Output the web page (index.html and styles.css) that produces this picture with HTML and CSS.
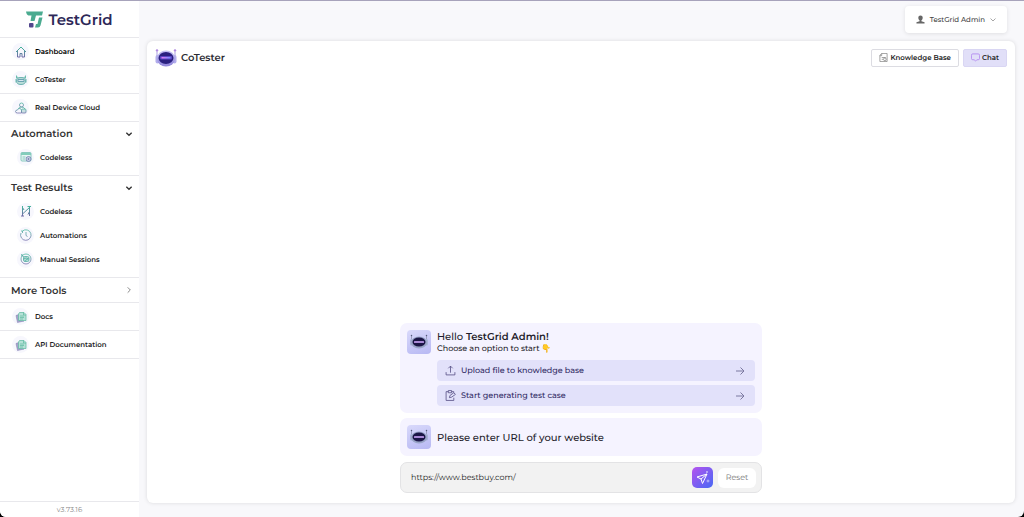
FILE: index.html
```
<!DOCTYPE html>
<html lang="en">
	<head>
		<meta charset="utf-8">
		<title>TestGrid</title>
		<link rel="stylesheet" href="styles.css">
	</head>
	<body>
		<svg class="sprite" aria-hidden="true">
			<defs>
				<linearGradient id="duo" x1="0" y1="0" x2="0" y2="1">
					<stop offset="0" stop-color="#45b79b"/>
					<stop offset="1" stop-color="#6f69a6"/>
				</linearGradient>
				<linearGradient id="shell" x1="0" y1="0" x2="0" y2="1">
					<stop offset="0" stop-color="#c6c3f4"/>
					<stop offset="1" stop-color="#8f84da"/>
				</linearGradient>
				<linearGradient id="visor" x1="0" y1="0" x2="1" y2="0">
					<stop offset="0" stop-color="#e77bf0"/>
					<stop offset="1" stop-color="#6f8bff"/>
				</linearGradient>
			</defs>
			<symbol id="bot" viewBox="0 0 44 38">
				<path d="M4 8v9M40 8v9" stroke="#a99fe0" stroke-width="2"/>
				<circle cx="4" cy="5" r="2.5" fill="#b08be0"/>
				<circle cx="40" cy="5" r="2.5" fill="#b08be0"/>
				<rect x="1" y="14" width="8" height="17" rx="4" fill="#b3aeec"/>
				<rect x="35" y="14" width="8" height="17" rx="4" fill="#b3aeec"/>
				<ellipse cx="22" cy="21" rx="18" ry="16" fill="url(#shell)"/>
				<ellipse cx="22" cy="20" rx="15" ry="12" fill="#2a2080"/>
				<rect x="10" y="16" width="24" height="7" rx="2" fill="#5c46c4"/>
				<rect x="13" y="18" width="18" height="3" fill="url(#visor)"/>
			</symbol>
			<symbol id="bot-small" viewBox="0 0 48 48">
				<path d="M9 12v6M39 12v6" stroke="#8e92b0" stroke-width="1.500"/>
				<circle cx="9" cy="11" r="1.500" fill="#555a7c"/>
				<circle cx="39" cy="11" r="1.500" fill="#555a7c"/>
				<rect x="6" y="18" width="6" height="13" rx="3" fill="#a8b2d7"/>
				<rect x="36" y="18" width="6" height="13" rx="3" fill="#a8b2d7"/>
				<ellipse cx="24" cy="25" rx="16" ry="12" fill="#98a4c6"/>
				<ellipse cx="24" cy="24" rx="13" ry="9" fill="#1b1546"/>
				<rect x="14" y="22" width="20" height="4" rx="1" fill="#a98ad6"/>
			</symbol>
			<symbol id="docs" viewBox="0 0 24 24">
				<path d="M2 9l5-2 2 12 9 1-13 3z" fill="#a5a4cb" stroke="#7e7ab0"/>
				<path d="M9 3h9l4 4v12H7V6z" fill="#b5e1d7" stroke="#64bba4" stroke-width="1.500"/>
				<path d="M17 3v5h5M10 10h8M10 13h8M10 16h6" fill="none" stroke="#64bba4" stroke-width="1.500"/>
			</symbol>
			<symbol id="down" viewBox="0 0 12 12">
				<path d="M2 4l4 4 4-4" fill="none" stroke="currentColor" stroke-width="2"/>
			</symbol>
			<symbol id="arrow" viewBox="0 0 20 20">
				<path d="M2 10h16M11 3l7 7-7 7" fill="none" stroke="currentColor" stroke-width="2"/>
			</symbol>
		</svg>

		<div class="app">
			<aside class="sidebar">
				<a class="logo" href="#">
					<svg viewBox="0 0 34 34" width="17" height="17" aria-hidden="true">
						<path d="M0 1h34l-2 8H20l-3 11H9l2-11H5Q1 8 0 1z" fill="#4bab90"/>
						<path d="M26 13h7l-4 16q-1 4-5 4h-6l2-7h3z" fill="#4bab90"/>
						<rect x="6" y="24" width="9" height="9" rx="2" fill="#51468d"/>
					</svg>
					<span>TestGrid</span>
				</a>
				<nav class="menu">
					<a class="item active" href="#">
						<span class="bubble">
							<svg viewBox="0 0 24 24" aria-hidden="true"><path d="M2 12L12 2l10 10M5 10v12h5v-7h4v7h5V10" fill="none" stroke="url(#duo)" stroke-width="2" stroke-linejoin="round"/></svg>
						</span>
						Dashboard
					</a>
					<a class="item" href="#">
						<span class="bubble">
							<svg viewBox="0 0 24 24" aria-hidden="true">
								<path d="M3 3v6M21 3v6M3 5l4 3q5-2 10 0l4-3M2 10v7M22 10v7" fill="none" stroke="#6abcae" stroke-width="2"/>
								<ellipse cx="12" cy="14" rx="9" ry="7" fill="#b9ded9" stroke="#6fb3b2" stroke-width="2"/>
								<path d="M6 11h12v4H6z" fill="#d9e7f0" stroke="#6ba3b2" stroke-width="2"/>
							</svg>
						</span>
						CoTester
					</a>
					<a class="item" href="#">
						<span class="bubble">
							<svg viewBox="0 0 24 24" fill="none" stroke="url(#duo)" stroke-width="1.500" aria-hidden="true">
								<circle cx="13" cy="6" r="4"/>
								<path d="M7 13q1-3 6-3t7 4M5 22q-4 0-4-3t4-3q1-4 5-3 3 1 3 4v5z"/>
								<rect x="13" y="14" width="9" height="8" rx="2" fill="#c9dfe2"/>
							</svg>
						</span>
						Real Device Cloud
					</a>
					<section class="group">
						<h2><button type="button">Automation <svg class="caret" aria-hidden="true"><use href="#down"/></svg></button></h2>
						<a class="subitem" href="#">
							<span class="bubble">
								<svg viewBox="0 0 24 24" aria-hidden="true">
									<rect x="2" y="3" width="20" height="17" rx="2" fill="#e8f6f4" stroke="#67b9ab" stroke-width="1.500"/>
									<path d="M2 4h20v4H2z" fill="#83cdbb"/>
									<path d="M5 12h6M5 16h5" stroke="#67b9ab" stroke-width="1.500"/>
									<circle cx="17" cy="16" r="5" fill="#c6cde3" stroke="#6c7caf" stroke-width="1.500"/>
									<circle cx="17" cy="16" r="1.500" fill="#5c659e"/>
								</svg>
							</span>
							Codeless
						</a>
					</section>
					<section class="group">
						<h2><button type="button">Test Results <svg class="caret" aria-hidden="true"><use href="#down"/></svg></button></h2>
						<a class="subitem" href="#">
							<span class="bubble">
								<svg viewBox="0 0 24 24" aria-hidden="true"><path d="M5 2v20M2 22h6M4 19L20 4M19 2v20M15 3h7M5 5l3 5M16 19l3-6" fill="none" stroke="url(#duo)" stroke-width="2"/></svg>
							</span>
							Codeless
						</a>
						<a class="subitem" href="#">
							<span class="bubble">
								<svg viewBox="0 0 24 24" aria-hidden="true"><path d="M5 4a10.500 10.500 0 1 1-3 4M5 4H2m3 0v4M12 6v7l3 2" fill="none" stroke="url(#duo)" stroke-width="1.500"/></svg>
							</span>
							Automations
						</a>
						<a class="subitem" href="#">
							<span class="bubble">
								<svg viewBox="0 0 24 24" fill="none" stroke="#4da99f" stroke-width="1.500" aria-hidden="true">
									<circle cx="12" cy="12" r="10" stroke="url(#duo)"/>
									<path d="M2 3l6 5M4 7V2"/>
									<rect x="7" y="7" width="11" height="10" rx="3" fill="#b5ded6"/>
									<path d="M7 12q5-4 11 0M10 17q2-5 6-5"/>
								</svg>
							</span>
							Manual Sessions
						</a>
					</section>
					<section class="more">
						<h2><button type="button">More Tools
							<svg class="caret closed" viewBox="0 0 12 12" aria-hidden="true"><path d="M4 2l4 4-4 4" fill="none" stroke="currentColor" stroke-width="1.500"/></svg>
						</button></h2>
					</section>
					<a class="item" href="#"><span class="bubble"><svg aria-hidden="true"><use href="#docs"/></svg></span>Docs</a>
					<a class="item" href="#"><span class="bubble"><svg aria-hidden="true"><use href="#docs"/></svg></span>API Documentation</a>
				</nav>
				<footer class="version">v3.73.16</footer>
			</aside>

			<div class="content">
				<header class="topbar">
					<button class="user" type="button">
						<svg viewBox="0 0 20 20" width="9" height="9" aria-hidden="true"><path d="M10 1q5 0 5 5 0 4-3 6v2l7 2v3H1v-3l7-2v-2Q5 10 5 6q0-5 5-5z" fill="#666"/></svg>
						TestGrid Admin
						<svg viewBox="0 0 12 12" width="6" height="6" aria-hidden="true"><path d="M1 3l5 5 5-5" fill="none" stroke="#888" stroke-width="1.500"/></svg>
					</button>
				</header>
				<main class="panel">
					<div class="panel-head">
						<svg class="head-bot" aria-hidden="true"><use href="#bot"/></svg>
						<h1>CoTester</h1>
						<button class="tab" type="button">
							<svg viewBox="0 0 20 20" width="9" height="9" fill="none" stroke="#777" stroke-width="1.500" aria-hidden="true">
								<path d="M6 1h12v18H2V5zM6 1v5H2M6 10h9M6 14h3"/>
								<circle cx="13" cy="14" r="3"/>
							</svg>
							Knowledge Base
						</button>
						<button class="tab selected" type="button">
							<svg viewBox="0 0 20 20" width="9" height="9" aria-hidden="true"><path d="M4 2h12q3 0 3 3v7q0 3-3 3h-3l-3 3-3-3H4q-3 0-3-3V5q0-3 3-3z" fill="none" stroke="#b48bf0" stroke-width="2"/></svg>
							Chat
						</button>
					</div>

					<div class="chat">
						<article class="message">
							<span class="avatar"><svg aria-hidden="true"><use href="#bot-small"/></svg></span>
							<div class="body">
								<p class="hello">Hello <b>TestGrid Admin!</b></p>
								<p class="hint">Choose an option to start <span class="hand">👇</span></p>
								<button class="option" type="button">
									<svg viewBox="0 0 20 20" width="11" height="11" fill="none" stroke="#5a5288" stroke-width="1.500" aria-hidden="true"><path d="M2 13v5h16v-5M10 14V2M6 6l4-4 4 4"/></svg>
									<span>Upload file to knowledge base</span>
									<svg class="go" aria-hidden="true"><use href="#arrow"/></svg>
								</button>
								<button class="option" type="button">
									<svg viewBox="0 0 20 20" width="11" height="11" fill="none" stroke="#5a5288" stroke-width="1.500" aria-hidden="true"><path d="M6 3H2v16h14v-5M12 3h4v2M6 1h6v4H6zM8 14l1-4 7-5 3 3-7 5z"/></svg>
									<span>Start generating test case</span>
									<svg class="go" aria-hidden="true"><use href="#arrow"/></svg>
								</button>
							</div>
						</article>
						<article class="message ask">
							<span class="avatar"><svg aria-hidden="true"><use href="#bot-small"/></svg></span>
							<p>Please enter URL of your website</p>
						</article>
						<form class="entry">
							<input type="text" aria-label="Website URL" value="https://www.bestbuy.com/">
							<button class="send" type="button" aria-label="Send">
								<svg viewBox="0 0 28 28" width="14" height="14" fill="none" stroke="#fff" stroke-width="2" stroke-linejoin="round" aria-hidden="true">
									<path d="M2 12L22 6l-9 19-3-9zM10 16L22 6"/>
									<path d="M22 0v4M20 2h4M24 17v6M21 20h6" stroke-width="1"/>
								</svg>
							</button>
							<button class="reset" type="reset">Reset</button>
						</form>
					</div>
				</main>
			</div>
		</div>
	</body>
</html>
```

FILE: styles.css
```
* {
	box-sizing: border-box;
}
html {
	background: #000;
}
body {
	margin: 0;
	font-family: Montserrat, Inter, sans-serif;
	font-size: 8px;
	color: #222;
	text-rendering: geometricPrecision;
}
h1, h2, p {
	margin: 0;
}
a {
	color: inherit;
	text-decoration: none;
}
button, input {
	font: inherit;
	color: inherit;
	border: 0;
	padding: 0;
	background: none;
	text-rendering: inherit;
}
button {
	cursor: pointer;
}
svg {
	flex: none;
}
.sprite {
	position: absolute;
	width: 0;
	height: 0;
}
.app {
	display: flex;
	min-height: 100vh;
	border-top: 1px solid #a7a3bb;
	border-radius: 0 0 6px 6px;
	background: #f8f8fb;
	overflow: hidden;
}

/* sidebar */
.sidebar {
	display: flex;
	flex-direction: column;
	flex: none;
	width: 139px;
	background: #fff;
}
.logo {
	display: flex;
	align-items: center;
	justify-content: center;
	gap: 5px;
	height: 37px;
	border-bottom: 1px solid #e8e8ec;
	font-size: 15px;
	font-weight: 600;
	color: #2d2858;
}
.menu {
	flex: 1;
}
.item {
	display: flex;
	align-items: center;
	gap: 6px;
	height: 28px;
	padding-left: 12px;
	border-bottom: 1px solid #e8e8ec;
	font-size: 7px;
	font-weight: 600;
}
.item.active {
	color: #000;
}
.bubble {
	display: flex;
	align-items: center;
	justify-content: center;
	width: 17px;
	height: 17px;
	border-radius: 50%;
	background: #f7f7fd;
}
.bubble svg {
	width: 12px;
	height: 12px;
}
.group {
	padding-bottom: 6px;
	border-bottom: 1px solid #e8e8ec;
}
.more {
	border-bottom: 1px solid #e8e8ec;
}
.sidebar h2 {
	font-size: 10px;
	font-weight: 600;
}
.sidebar h2 button {
	display: flex;
	align-items: center;
	justify-content: space-between;
	width: 100%;
	height: 24px;
	padding: 0 6px 0 11px;
	color: #333;
}
.group h2 button {
	height: 23px;
}
.caret {
	width: 8px;
	height: 8px;
}
.closed {
	color: #888;
}
.subitem {
	display: flex;
	align-items: center;
	gap: 6px;
	height: 24px;
	padding-left: 17px;
	font-size: 7px;
	font-weight: 600;
}
.version {
	height: 16px;
	border-top: 1px solid #e8e8ec;
	font-size: 7px;
	line-height: 15px;
	text-align: center;
	color: #888;
}

/* main area */
.content {
	display: flex;
	flex-direction: column;
	flex: 1;
	padding: 5px 9px 14px 8px;
}
.topbar {
	display: flex;
	justify-content: flex-end;
	padding: 0 8px 8px 0;
}
.user {
	display: flex;
	align-items: center;
	gap: 5px;
	height: 27px;
	padding: 0 11px;
	border-radius: 4px;
	background: #fff;
	box-shadow: 0 1px 4px rgba(0, 0, 0, 0.1);
	font-size: 7px;
	font-weight: 500;
	color: #444;
}
.panel {
	display: flex;
	flex-direction: column;
	justify-content: space-between;
	flex: 1;
	padding: 7px 8px 10px;
	border-radius: 6px;
	background: #fff;
	box-shadow: 0 0 4px rgba(0, 0, 0, 0.12);
}
.panel-head {
	display: flex;
	align-items: center;
	gap: 4px;
}
.panel-head h1 {
	margin-right: auto;
	font-size: 10px;
	font-weight: 600;
	color: #2b2b33;
}
.head-bot {
	width: 22px;
	height: 19px;
}
.tab {
	display: flex;
	align-items: center;
	gap: 2px;
	height: 18px;
	padding: 0 7px;
	border: 1px solid #dcdce2;
	border-radius: 2px;
	font-size: 7px;
	font-weight: 600;
}
.tab.selected {
	border-color: #d9d6f3;
	background: #e1dff8;
}

/* conversation */
.chat {
	display: flex;
	flex-direction: column;
	gap: 5px;
	width: 100%;
	max-width: 362px;
	margin: 0 auto;
}
.message {
	display: flex;
	gap: 6px;
	padding: 7px;
	border-radius: 7px;
	background: #f5f3ff;
	font-weight: 500;
	color: #1f1d2b;
}
.avatar {
	flex: none;
	width: 24px;
	height: 24px;
	border-radius: 4px;
	background: linear-gradient(160deg, #d9d9fb, #b7b8f3);
}
.avatar svg {
	display: block;
	width: 24px;
	height: 24px;
}
.body {
	flex: 1;
}
.hello {
	font-size: 10px;
	line-height: 13px;
}
.hello b {
	font-weight: 600;
}
.hint {
	margin-bottom: 5px;
	line-height: 11px;
}
.hand {
	font-family: "Noto Color Emoji", sans-serif;
}
.option {
	display: flex;
	align-items: center;
	gap: 5px;
	width: 100%;
	height: 21px;
	padding: 0 10px 0 8px;
	border-radius: 4px;
	background: #e2e1fa;
	font-weight: 500;
	color: #2f2862;
}
.option + .option {
	margin-top: 4px;
}
.go {
	width: 10px;
	height: 10px;
	margin-left: auto;
	color: #7b78a0;
}
.ask {
	align-items: center;
	font-size: 10px;
}
.entry {
	display: flex;
	align-items: center;
	gap: 5px;
	height: 31px;
	margin-top: 1px;
	padding: 0 5px 0 10px;
	border: 1px solid #e3e3e5;
	border-radius: 7px;
	background: #f2f2f2;
}
.entry input {
	flex: 1;
	min-width: 0;
}
.send {
	display: flex;
	align-items: center;
	justify-content: center;
	width: 21px;
	height: 21px;
	border-radius: 5px;
	background: linear-gradient(135deg, #b653ee, #4668f5);
}
.reset {
	width: 38px;
	height: 20px;
	border-radius: 6px;
	background: #fff;
	color: #777;
}
```
